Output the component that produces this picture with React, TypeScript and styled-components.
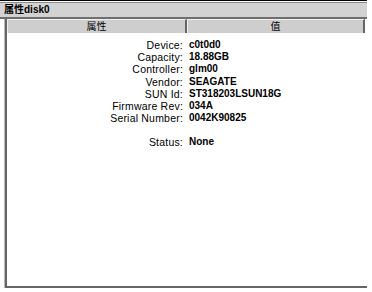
import styled, { createGlobalStyle } from "styled-components";

const GlobalStyle = createGlobalStyle`
  html, body {
    margin: 0;
    padding: 0;
    background: #fff;
  }
  body {
    font-family: "Liberation Sans", Arial, "Noto Sans CJK SC", sans-serif;
    color: #000;
  }
`;

const rows: { label: string; value: string }[] = [
  { label: "Device:", value: "c0t0d0" },
  { label: "Capacity:", value: "18.88GB" },
  { label: "Controller:", value: "glm00" },
  { label: "Vendor:", value: "SEAGATE" },
  { label: "SUN Id:", value: "ST318203LSUN18G" },
  { label: "Firmware Rev:", value: "034A" },
  { label: "Serial Number:", value: "0042K90825" },
];

export default function App() {
  return (
    <>
      <GlobalStyle />
      <Window>
        <TitleBar>属性disk0</TitleBar>
        <Panel>
          <HeaderRow>
            <HeaderCell>属性</HeaderCell>
            <HeaderCell>值</HeaderCell>
          </HeaderRow>
          <Body>
            <Props>
              {rows.map((r) => (
                <PropRow key={r.label}>
                  <Label>{r.label}</Label>
                  <Value>{r.value}</Value>
                </PropRow>
              ))}
              <Spacer />
              <PropRow>
                <Label>Status:</Label>
                <Value>None</Value>
              </PropRow>
            </Props>
          </Body>
        </Panel>
      </Window>
    </>
  );
}

const Window = styled.div`
  width: 367px;
  height: 287px;
  display: flex;
  flex-direction: column;
  border-top: 1px solid #000;
`;

const TitleBar = styled.div`
  margin-top: 1px;
  height: 14px;
  border-top: 1px solid #8a8a8a;
  border-bottom: 2px solid #6e6e6e;
  background: #d2d2d2;
  padding-left: 4px;
  font-size: 10px;
  font-weight: bold;
  line-height: 14px;
`;

const Panel = styled.div`
  flex: 1;
  display: flex;
  flex-direction: column;
  margin-left: 4px;
  border-left: 1px solid #b8b8b8;
  min-height: 0;
`;

const HeaderRow = styled.div`
  display: grid;
  grid-template-columns: 180px 178px;
  border-left: 2px solid #666;
`;

const HeaderCell = styled.div`
  height: 13px;
  background: #cecece;
  border-top: 1px solid #f0f0f0;
  border-left: 1px solid #f0f0f0;
  border-right: 2px solid #666;
  text-align: center;
  font-size: 10px;
  line-height: 13px;
`;

const Body = styled.div`
  flex: 1;
  overflow: hidden;
  border-left: 2px solid #666;
  border-bottom: 2px solid #666;
  background: #fff;
`;

const Props = styled.div`
  width: 360px;
  padding-top: 6px;
  display: flex;
  flex-direction: column;
`;

const PropRow = styled.div`
  display: grid;
  grid-template-columns: 176px 1fr;
  column-gap: 6px;
  height: 12.2px;
  line-height: 12.2px;
  font-size: 10px;
`;

const Label = styled.span`
  text-align: right;
  font-size: 10.5px;
  letter-spacing: 0.2px;
`;

const Value = styled.span`
  font-weight: bold;
`;

const Spacer = styled.div`
  height: 12px;
`;
